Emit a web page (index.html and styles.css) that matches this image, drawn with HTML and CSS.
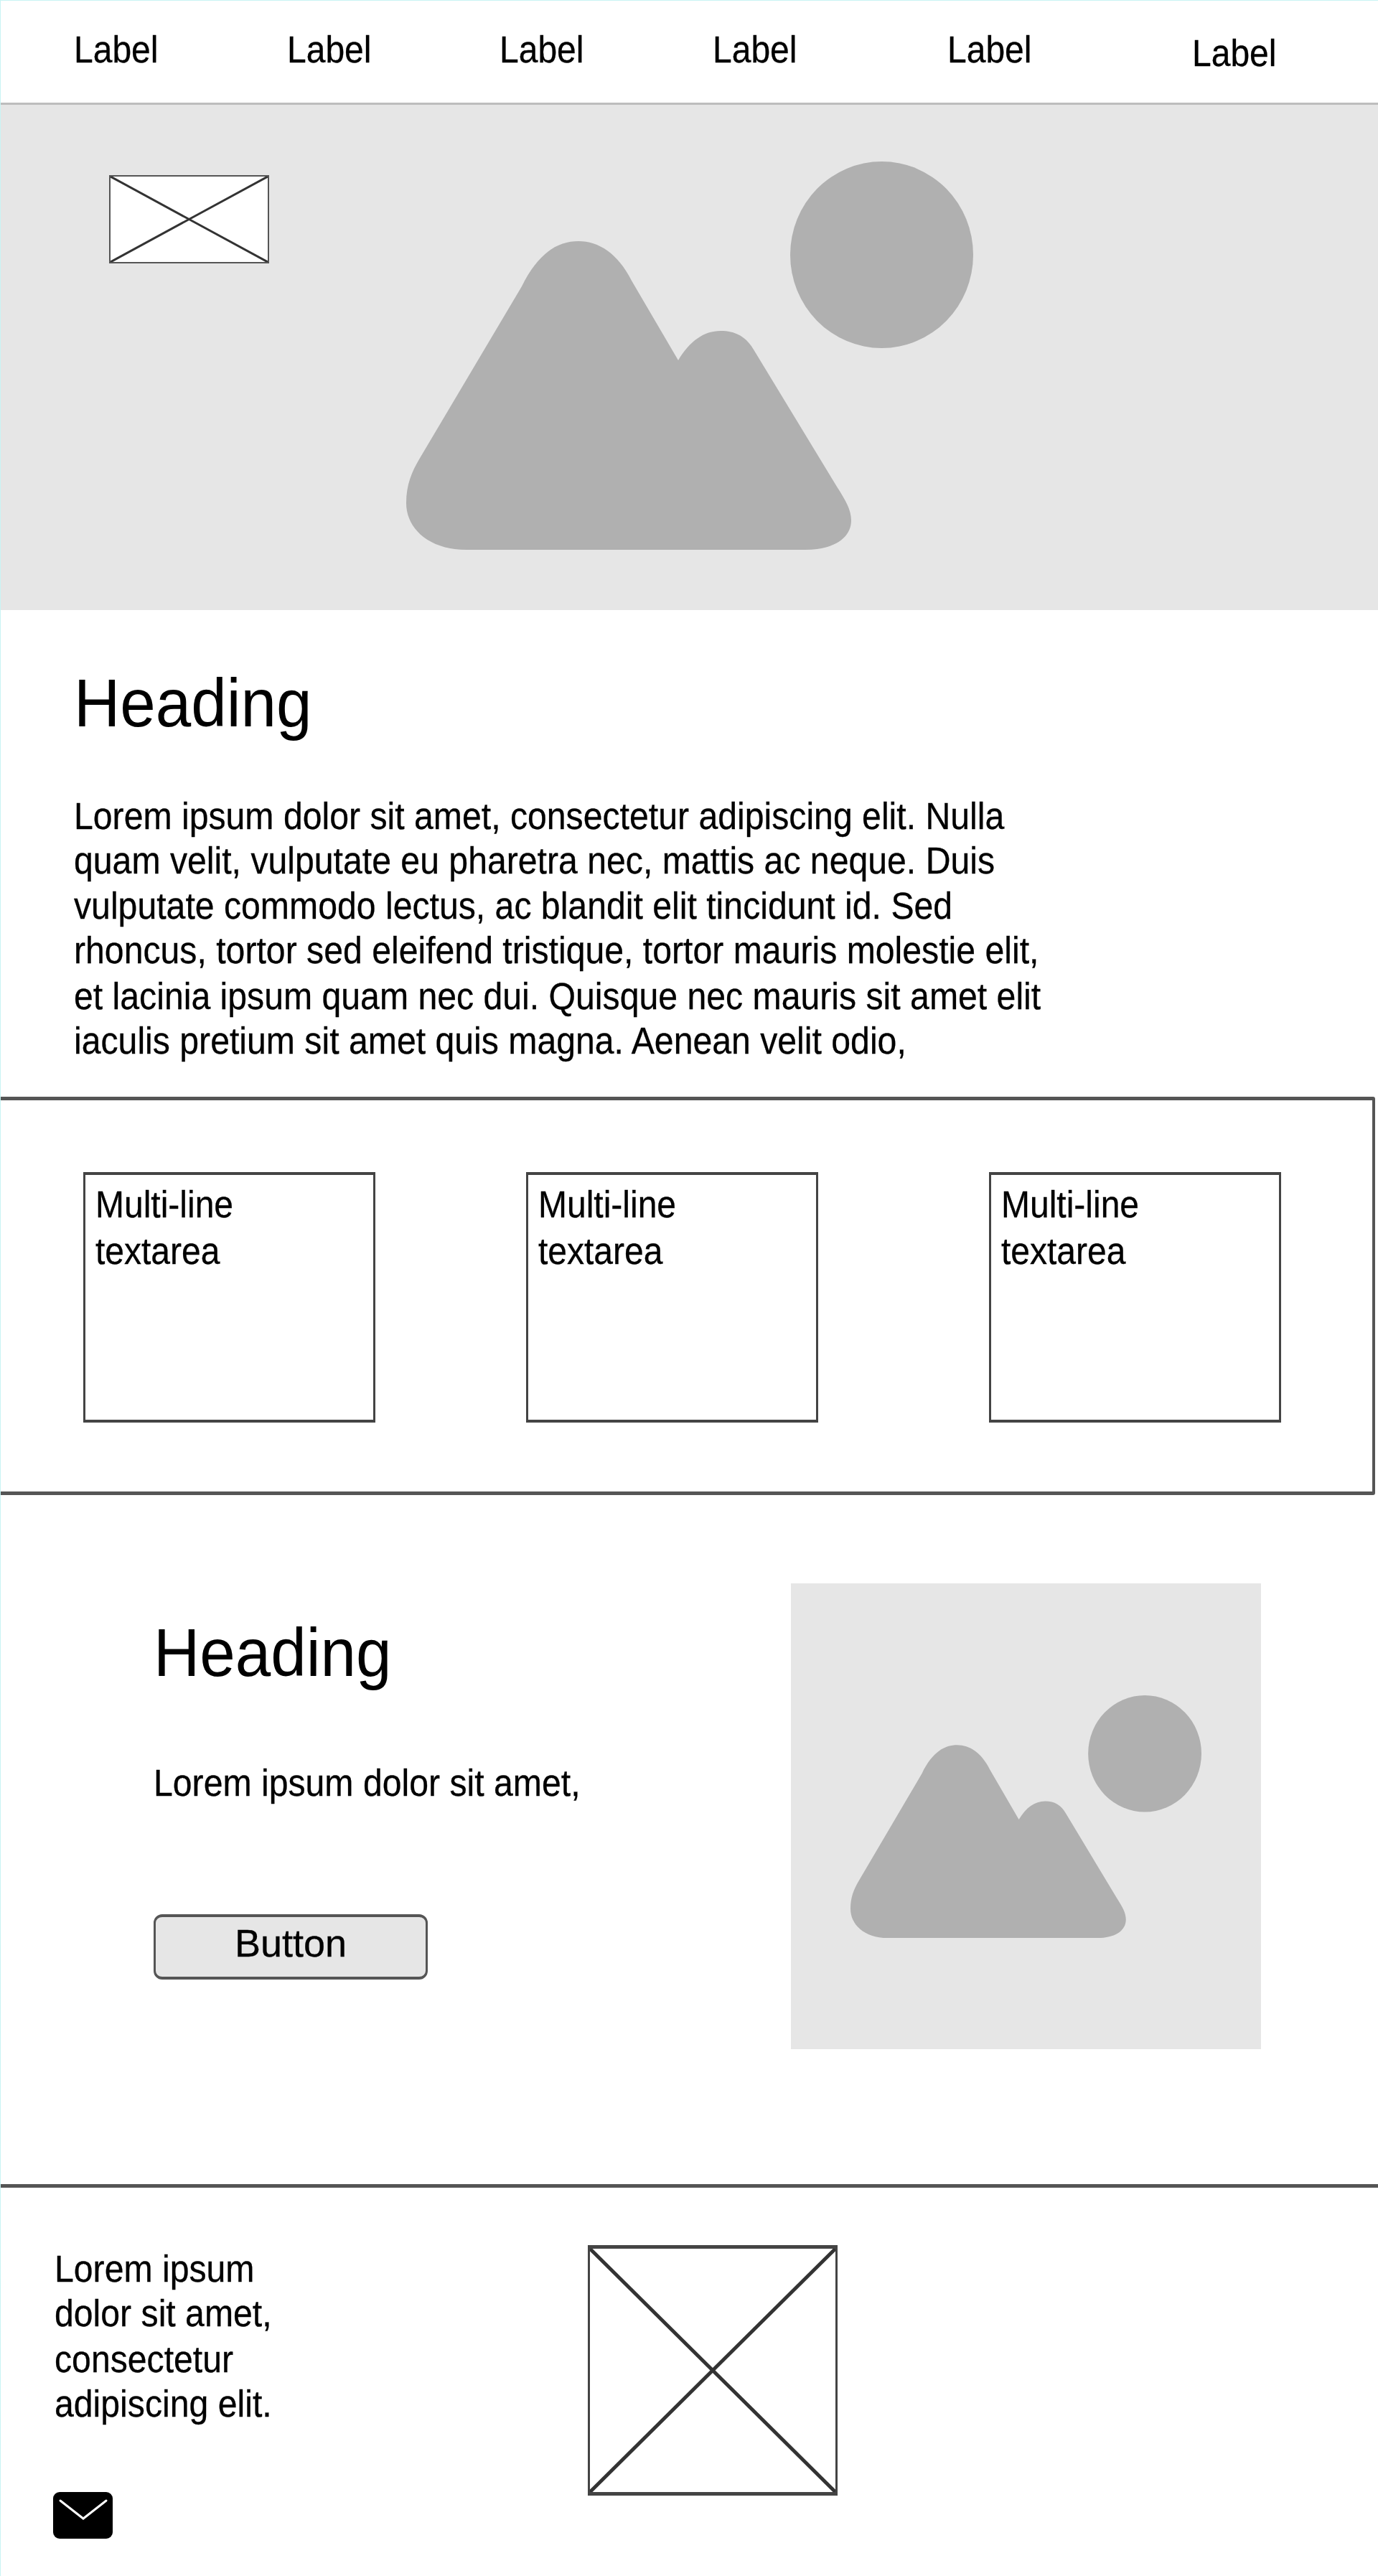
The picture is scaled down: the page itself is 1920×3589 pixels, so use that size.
FILE: index.html
```html
<!DOCTYPE html>
<html lang="en">

<head>
    <meta charset="UTF-8">
    <meta name="viewport" content="width=device-width, initial-scale=1.0">
    <title>Wireframe</title>
    <link rel="stylesheet" href="styles.css">
</head>

<body>
    <svg class="defs" width="0" height="0">
        <symbol id="picture" viewBox="0 0 790 541" preserveAspectRatio="none">
            <ellipse cx="662.5" cy="130" rx="127.5" ry="130"></ellipse>
            <path d="M84 541C30 541 0 510 0 476C0 450 8 432 18 415L161 174C185 125 213 111 240 111C268 111 295 128 314 166L379 277C395 250 415 236 438 236C460 236 474 245 484 262L600 453C612 472 620 485 620 500C620 525 595 541 556 541Z"></path>
        </symbol>
        <symbol id="cross" viewBox="0 0 100 100" preserveAspectRatio="none">
            <rect x="0" y="0" width="100" height="100" fill="#fff"></rect>
            <line x1="0" y1="0" x2="100" y2="100" vector-effect="non-scaling-stroke"></line>
            <line x1="100" y1="0" x2="0" y2="100" vector-effect="non-scaling-stroke"></line>
        </symbol>
    </svg>

    <div class="page">
        <nav class="nav">
            <span class="nav-label">Label</span>
            <span class="nav-label">Label</span>
            <span class="nav-label">Label</span>
            <span class="nav-label">Label</span>
            <span class="nav-label">Label</span>
            <span class="nav-label nav-label-last">Label</span>
        </nav>

        <section class="hero">
            <svg class="logo-box"><use href="#cross"></use></svg>
            <svg class="hero-art"><use href="#picture"></use></svg>
        </section>

        <section class="intro">
            <h1 class="heading">Heading</h1>
            <p class="copy">Lorem ipsum dolor sit amet, consectetur adipiscing elit. Nulla<br>
                quam velit, vulputate eu pharetra nec, mattis ac neque. Duis<br>
                vulputate commodo lectus, ac blandit elit tincidunt id. Sed<br>
                rhoncus, tortor sed eleifend tristique, tortor mauris molestie elit,<br>
                et lacinia ipsum quam nec dui. Quisque nec mauris sit amet elit<br>
                iaculis pretium sit amet quis magna. Aenean velit odio,</p>
        </section>

        <section class="textareas">
            <div class="textarea"><p class="textarea-text">Multi-line<br>textarea</p></div>
            <div class="textarea"><p class="textarea-text">Multi-line<br>textarea</p></div>
            <div class="textarea"><p class="textarea-text">Multi-line<br>textarea</p></div>
        </section>

        <section class="feature">
            <div class="feature-text">
                <h2 class="heading">Heading</h2>
                <p class="copy">Lorem ipsum dolor sit amet,</p>
                <button class="button" type="button">Button</button>
            </div>
            <div class="feature-image">
                <svg class="feature-art"><use href="#picture"></use></svg>
            </div>
        </section>

        <footer class="footer">
            <div class="footer-text">
                <p class="copy">Lorem ipsum<br>dolor sit amet,<br>consectetur<br>adipiscing elit.</p>
                <svg class="mail" viewBox="0 0 83 65">
                    <rect width="83" height="65" rx="9"></rect>
                    <path d="M10 12L42 37L74 12"></path>
                </svg>
            </div>
            <svg class="footer-box"><use href="#cross"></use></svg>
        </footer>
    </div>
</body>

</html>
```

FILE: styles.css
```css
/* Wireframe page */
body {
    font-family: "Liberation Sans", Arial, sans-serif;
    margin: 0;
    padding: 0;
    background-color: #fff;
    color: #000;
}

.defs {
    position: absolute;
}

.page {
    width: 1920px;
    height: 3589px;
    box-sizing: border-box;
    border-top: 1px solid #c9f4f4;
    border-left: 1px solid #c9f4f4;
    overflow: hidden;
}

/* The text in the wireframe is a little taller and heavier than the font */
.nav-label,
.heading,
.copy,
.textarea-text {
    transform: scaleY(1.07);
    transform-origin: left top;
}

.nav-label,
.copy,
.textarea-text,
.button {
    -webkit-text-stroke: 0.3px #000;
}

/* Top row of labels */
.nav {
    display: grid;
    grid-template-columns: 297px 296px 297px 327px 341px auto;
    height: 145px;
    box-sizing: border-box;
    padding: 41px 0 0 102px;
    border-bottom: 3px solid #bdbdbd;
}

.nav-label {
    font-size: 48px;
    line-height: 52px;
}

.nav-label-last {
    margin-top: 5px;
}

.hero {
    display: flex;
    align-items: flex-start;
    height: 704px;
    box-sizing: border-box;
    padding: 79px 0 0 151px;
    background-color: #e6e6e6;
}

.logo-box {
    width: 223px;
    height: 123px;
    margin-top: 19px;
    box-sizing: border-box;
    border: 2px solid #555;
    stroke-width: 3px;
}

.hero-art {
    width: 790px;
    height: 541px;
    margin-left: 191px;
}

#picture {
    fill: #b0b0b0;
}

#cross line {
    stroke: #333;
}

.intro {
    height: 678px;
    box-sizing: border-box;
    padding: 0 0 0 102px;
}

.heading {
    margin: 0;
    font-size: 89px;
    font-weight: 400;
    line-height: 100px;
}

.intro .heading {
    padding-top: 70px;
}

.copy {
    margin: 0;
    font-size: 48.2px;
    line-height: 58.4px;
    white-space: nowrap;
}

.intro .copy {
    margin-top: 86px;
}

/* Outlined row, its left edge runs off the page */
.textareas {
    display: flex;
    height: 555px;
    width: 1920px;
    margin-left: -5px;
    box-sizing: border-box;
    padding: 100px 0 0 116px;
    border-style: solid;
    border-color: #555;
    border-width: 5px 4px;
    border-radius: 3px;
}

.textarea {
    width: 407px;
    height: 349px;
    box-sizing: border-box;
    padding: 10px 0 0 14px;
    border-style: solid;
    border-color: #444;
    border-width: 4px 3px;
}

.textarea-text {
    margin: 0;
    font-size: 48px;
    line-height: 60.7px;
}

.textarea + .textarea {
    margin-left: 210px;
}

.textarea:last-child {
    margin-left: 238px;
}

.feature {
    display: flex;
    height: 960px;
    box-sizing: border-box;
    padding: 123px 0 0 213px;
}

.feature-text {
    width: 888px;
}

.feature-text .heading {
    padding-top: 40px;
}

.feature-text .copy {
    margin-top: 107px;
}

.button {
    display: block;
    width: 382px;
    height: 91px;
    margin-top: 156px;
    padding: 0 0 12px;
    border-style: solid;
    border-color: #555;
    border-width: 4px 3px;
    border-radius: 12px;
    background-color: #e6e6e6;
    font-family: inherit;
    font-size: 54px;
    color: #000;
}

.feature-image {
    display: flex;
    align-items: center;
    justify-content: center;
    width: 655px;
    height: 649px;
    background-color: #e6e6e6;
}

.feature-art {
    width: 489px;
    height: 338px;
}

.footer {
    display: flex;
    height: 546px;
    margin-left: -1px;
    box-sizing: border-box;
    border-top: 5px solid #555;
    padding: 80px 0 0 76px;
}

.footer-text {
    width: 743px;
}

.footer-text .copy {
    padding-top: 2px;
}

.mail {
    display: block;
    width: 83px;
    height: 65px;
    margin-top: 108px;
    margin-left: -2px;
}

.mail rect {
    fill: #000;
}

.mail path {
    fill: none;
    stroke: #fff;
    stroke-width: 3px;
    stroke-linecap: round;
}

.footer-box {
    width: 348px;
    height: 349px;
    box-sizing: border-box;
    border-style: solid;
    border-color: #444;
    border-width: 5px 3px;
    stroke-width: 5px;
}
```
